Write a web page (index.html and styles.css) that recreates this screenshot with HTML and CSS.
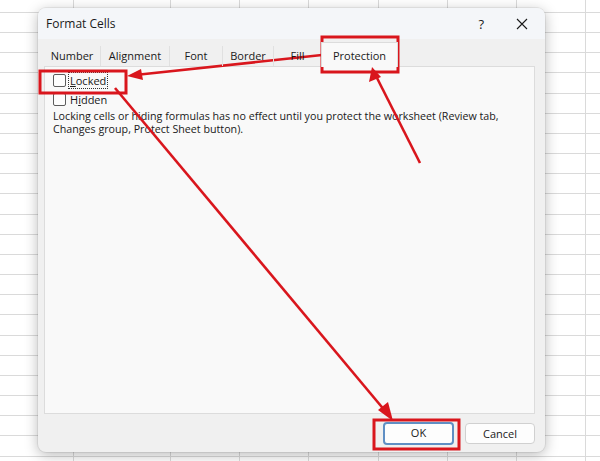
FILE: index.html
```html
<!DOCTYPE html>
<html lang="en">
<head>
    <meta charset="UTF-8">
    <title>Format Cells</title>
    <link rel="stylesheet" href="styles.css">
</head>
<body>
    <div class="dialog">
        <div class="titlebar">
            <span class="title">Format Cells</span>
            <span class="help">?</span>
            <svg class="close" width="12" height="12" viewBox="0 0 12 12">
                <path d="M1 1 L11 11 M11 1 L1 11" stroke="#1a1a1a" stroke-width="1.1" fill="none"/>
            </svg>
        </div>

        <div class="tabs">
            <div class="tab">Number</div>
            <div class="tab">Alignment</div>
            <div class="tab">Font</div>
            <div class="tab">Border</div>
            <div class="tab">Fill</div>
            <div class="tab active">Protection</div>
        </div>

        <div class="panel">
            <label class="check">
                <span class="box"></span>
                <span class="focus"><u>L</u>ocked</span>
            </label>
            <label class="check">
                <span class="box"></span>
                <span>H<u>i</u>dden</span>
            </label>
            <p class="note">Locking cells or hiding formulas has no effect until you protect the worksheet (Review tab,<br>Changes group, Protect Sheet button).</p>
        </div>

        <div class="footer">
            <div class="btn default">OK</div>
            <div class="btn">Cancel</div>
        </div>
    </div>

    <!-- red markup drawn on top of the screenshot -->
    <svg class="marks" width="600" height="461" viewBox="0 0 600 461">
        <g fill="none" stroke="#d9161d" stroke-width="3">
            <rect x="40" y="71" width="86" height="22"/>
            <rect x="322" y="37" width="76" height="35"/>
            <rect x="374" y="420" width="85" height="29"/>
        </g>
        <g stroke="#d9161d" stroke-width="2.6" fill="none">
            <line x1="322" y1="55" x2="140" y2="74.5"/>
            <line x1="420" y1="163" x2="377" y2="78"/>
            <line x1="115" y1="88" x2="386" y2="412"/>
        </g>
        <g fill="#d9161d">
            <polygon points="127,76 141,69 143,80"/>
            <polygon points="372,67 369,82 381,77"/>
            <polygon points="393,421 378,410 388,402"/>
        </g>
    </svg>
</body>
</html>
```

FILE: styles.css
```css
body {
    margin: 0;
    width: 600px;
    height: 461px;
    overflow: hidden;
    padding: 8px 0 0 38px;
    box-sizing: border-box;
    font-family: "Open Sans", Arial, sans-serif;
    font-size: 11px;
    color: #1a1a1a;
    background-color: #ffffff;
    background-image:
        linear-gradient(to right, transparent 73px, #dadada 73px, #dadada 74px, transparent 74px),
        repeating-linear-gradient(to right, #dadada 0, #dadada 1px, transparent 1px, transparent 69.2px),
        repeating-linear-gradient(to bottom, #dadada 0, #dadada 1px, transparent 1px, transparent 20.16px);
    background-size: 600px 461px, 430px 461px, 600px 461px;
    background-position: 0 0, 170px 0, 0 12px;
    background-repeat: no-repeat, no-repeat, repeat;
}

.dialog {
    width: 507px;
    height: 444px;
    background: #f0f0f0;
    border-radius: 8px;
    box-shadow: 0 3px 14px rgba(0, 0, 0, 0.28), 0 0 0 1px rgba(0, 0, 0, 0.06);
    overflow: hidden;
    display: flex;
    flex-direction: column;
}

.titlebar {
    height: 31px;
    background: #f4f6f9;
    display: flex;
    align-items: center;
    padding: 0 17px 0 8px;
    flex-shrink: 0;
}

.title {
    font-size: 12px;
    flex: 1;
}

.help {
    font-size: 13px;
    margin-right: 32px;
}

.tabs {
    display: flex;
    height: 20px;
    margin: 7px 0 0 6px;
    align-items: flex-end;
    position: relative;
    z-index: 1;
}

.tab {
    height: 20px;
    line-height: 19px;
    text-align: center;
    border-left: 1px solid #e0e0e0;
    box-sizing: border-box;
}

.tab:first-child { width: 56px; border-left: none; }
.tab:nth-child(2) { width: 69px; }
.tab:nth-child(3) { width: 53px; }
.tab:nth-child(4) { width: 51px; }
.tab:nth-child(5) { width: 48px; }

.tab.active {
    width: 77px;
    height: 25px;
    line-height: 26px;
    background: #f9f9f9;
    border: 1px solid #dcdcdc;
    border-bottom: none;
    margin-bottom: -1px;
}

.panel {
    width: 491px;
    height: 348px;
    margin-left: 6px;
    background: #f9f9f9;
    border: 1px solid #dcdcdc;
    box-sizing: border-box;
    padding: 4px 0 0 8px;
}

.check {
    display: flex;
    align-items: center;
    height: 19px;
}

.box {
    width: 11px;
    height: 11px;
    border: 1px solid #5c5c5c;
    border-radius: 2px;
    background: #fdfdfd;
    margin-right: 4px;
}

.focus {
    outline: 1px dotted #333;
    padding: 0 1px;
    margin-left: -1px;
}

.note {
    margin: 1px 0 0;
    font-size: 10.7px;
    line-height: 13px;
}

.footer {
    flex: 1;
    display: flex;
    justify-content: flex-end;
    align-items: center;
    gap: 11px;
    padding: 0 10px 0 0;
}

.btn {
    width: 68px;
    height: 19px;
    line-height: 19px;
    text-align: center;
    background: #fdfdfd;
    border: 1px solid #d0d0d0;
    border-radius: 4px;
    font-size: 11px;
}

.btn.default {
    width: 67px;
    border: 2px solid #5f8fc4;
    line-height: 17px;
}

.marks {
    position: absolute;
    top: 0;
    left: 0;
    pointer-events: none;
}
```
